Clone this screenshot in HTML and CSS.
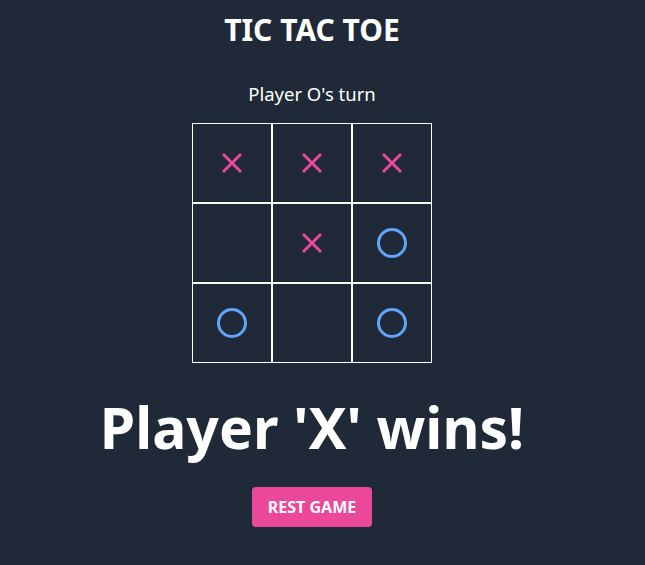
FILE: index.html
```html
<!DOCTYPE html>
<html>
<head>
<meta charset="utf-8">
<link rel="stylesheet" href="styles.css">
</head>
<body>
<div class="app">
  <h1 class="title">TIC TAC TOE</h1>
  <p class="turn">Player O's turn</p>
  <div class="board">
    <div class="cell"><svg class="x" viewBox="0 0 22 22"><path d="M2 2L20 20M20 2L2 20"/></svg></div>
    <div class="cell"><svg class="x" viewBox="0 0 22 22"><path d="M2 2L20 20M20 2L2 20"/></svg></div>
    <div class="cell"><svg class="x" viewBox="0 0 22 22"><path d="M2 2L20 20M20 2L2 20"/></svg></div>
    <div class="cell"></div>
    <div class="cell"><svg class="x" viewBox="0 0 22 22"><path d="M2 2L20 20M20 2L2 20"/></svg></div>
    <div class="cell"><svg class="o" viewBox="0 0 30 30"><circle cx="15" cy="15" r="13.5"/></svg></div>
    <div class="cell"><svg class="o" viewBox="0 0 30 30"><circle cx="15" cy="15" r="13.5"/></svg></div>
    <div class="cell"></div>
    <div class="cell"><svg class="o" viewBox="0 0 30 30"><circle cx="15" cy="15" r="13.5"/></svg></div>
  </div>
  <h2 class="winner">Player 'X' wins!</h2>
  <button class="reset">REST GAME</button>
</div>
</body>
</html>
```
FILE: styles.css
```css
html, body {
  margin: 0;
  padding: 0;
  background: #1f2937;
  height: 100%;
}
body {
  font-family: "Noto Sans", "Open Sans", sans-serif;
  color: #ffffff;
}
.app {
  width: 624px;
  display: flex;
  flex-direction: column;
  align-items: center;
}
.title {
  margin: 10px 0 0;
  font-size: 30px;
  line-height: 40px;
  font-weight: 700;
}
.turn {
  margin: 32px 0 0;
  font-size: 18.5px;
  line-height: 24px;
}
.board {
  margin-top: 17px;
  display: grid;
  grid-template-columns: repeat(3, 80px);
  grid-template-rows: repeat(3, 80px);
}
.cell {
  box-sizing: border-box;
  border: 1px solid #ffffff;
  display: flex;
  align-items: center;
  justify-content: center;
}
.x {
  width: 22px;
  height: 22px;
  fill: none;
  stroke: #ec4899;
  stroke-width: 3;
}
.o {
  width: 30px;
  height: 30px;
  fill: none;
  stroke: #60a5fa;
  stroke-width: 3;
}
.winner {
  margin: 28px 0 0;
  font-size: 57px;
  line-height: 72px;
  font-weight: 700;
}
.reset {
  margin-top: 24px;
  width: 120px;
  height: 40px;
  border: none;
  border-radius: 4px;
  background: #ec4899;
  color: #ffffff;
  font-family: "Noto Sans", "Open Sans", sans-serif;
  font-weight: 700;
  font-size: 16px;
}
```
